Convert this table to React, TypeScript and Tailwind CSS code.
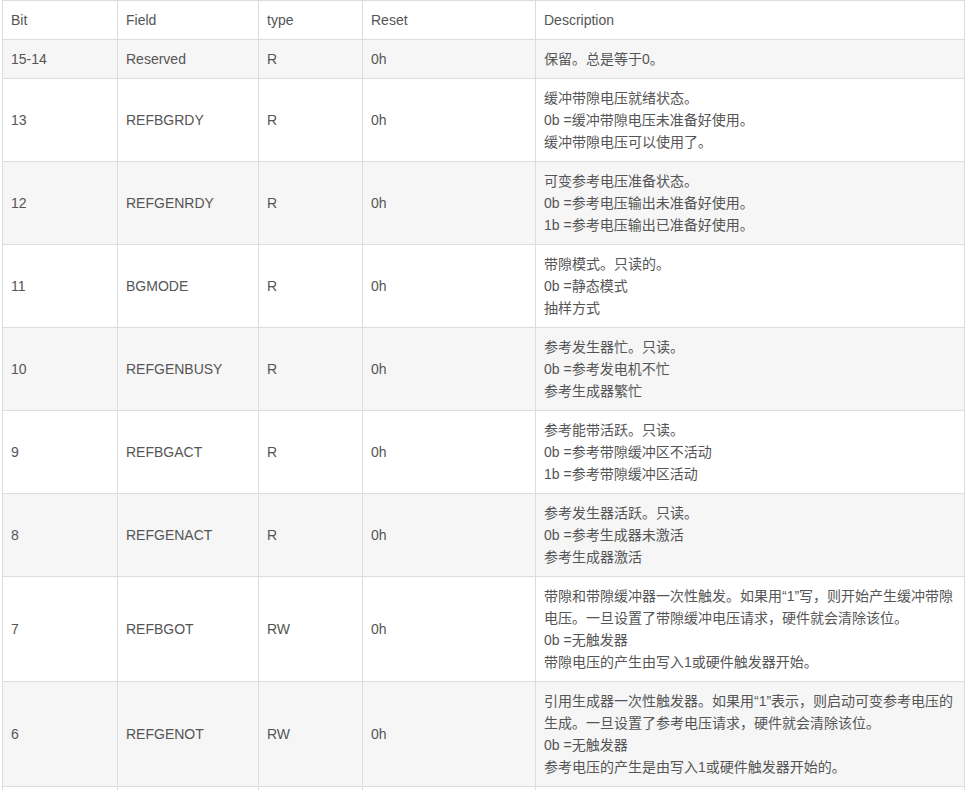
type Row = {
  bit: string;
  field: string;
  type: string;
  reset: string;
  desc: string[];
};

const rows: Row[] = [
  { bit: "15-14", field: "Reserved", type: "R", reset: "0h", desc: ["保留。总是等于0。"] },
  {
    bit: "13",
    field: "REFBGRDY",
    type: "R",
    reset: "0h",
    desc: ["缓冲带隙电压就绪状态。", "0b =缓冲带隙电压未准备好使用。", "缓冲带隙电压可以使用了。"],
  },
  {
    bit: "12",
    field: "REFGENRDY",
    type: "R",
    reset: "0h",
    desc: ["可变参考电压准备状态。", "0b =参考电压输出未准备好使用。", "1b =参考电压输出已准备好使用。"],
  },
  {
    bit: "11",
    field: "BGMODE",
    type: "R",
    reset: "0h",
    desc: ["带隙模式。只读的。", "0b =静态模式", "抽样方式"],
  },
  {
    bit: "10",
    field: "REFGENBUSY",
    type: "R",
    reset: "0h",
    desc: ["参考发生器忙。只读。", "0b =参考发电机不忙", "参考生成器繁忙"],
  },
  {
    bit: "9",
    field: "REFBGACT",
    type: "R",
    reset: "0h",
    desc: ["参考能带活跃。只读。", "0b =参考带隙缓冲区不活动", "1b =参考带隙缓冲区活动"],
  },
  {
    bit: "8",
    field: "REFGENACT",
    type: "R",
    reset: "0h",
    desc: ["参考发生器活跃。只读。", "0b =参考生成器未激活", "参考生成器激活"],
  },
  {
    bit: "7",
    field: "REFBGOT",
    type: "RW",
    reset: "0h",
    desc: [
      "带隙和带隙缓冲器一次性触发。如果用“1”写，则开始产生缓冲带隙",
      "电压。一旦设置了带隙缓冲电压请求，硬件就会清除该位。",
      "0b =无触发器",
      "带隙电压的产生由写入1或硬件触发器开始。",
    ],
  },
  {
    bit: "6",
    field: "REFGENOT",
    type: "RW",
    reset: "0h",
    desc: [
      "引用生成器一次性触发器。如果用“1”表示，则启动可变参考电压的",
      "生成。一旦设置了参考电压请求，硬件就会清除该位。",
      "0b =无触发器",
      "参考电压的产生是由写入1或硬件触发器开始的。",
    ],
  },
  { bit: "5", field: "REFBGEN", type: "RW", reset: "0h", desc: ["带隙和带隙缓冲器启用。"] },
];

const cell = "border border-[#dddddd] px-2 py-2 align-middle";

function Line({ children }: { children: React.ReactNode }) {
  return <div className="h-[22px] overflow-hidden leading-[22px]">{children}</div>;
}

export default function App() {
  return (
    <div
      className="bg-white pl-[2px] text-[14px] leading-[22px] text-[#555555]"
      style={{ fontFamily: '"Liberation Sans", Arial, "Noto Sans CJK SC", sans-serif' }}
    >
      <table className="w-[962px] table-fixed border-collapse">
        <colgroup>
          <col className="w-[115px]" />
          <col className="w-[141px]" />
          <col className="w-[104px]" />
          <col className="w-[173px]" />
          <col className="w-[429px]" />
        </colgroup>
        <thead>
          <tr className="bg-white">
            <th className={`${cell} text-left font-normal`}>
              <Line>Bit</Line>
            </th>
            <th className={`${cell} text-left font-normal`}>
              <Line>Field</Line>
            </th>
            <th className={`${cell} text-left font-normal`}>
              <Line>type</Line>
            </th>
            <th className={`${cell} text-left font-normal`}>
              <Line>Reset</Line>
            </th>
            <th className={`${cell} text-left font-normal`}>
              <Line>Description</Line>
            </th>
          </tr>
        </thead>
        <tbody>
          {rows.map((r, i) => (
            <tr key={r.bit} className={i % 2 === 0 ? "bg-[#f6f6f6]" : "bg-white"}>
              <td className={cell}>
                <Line>{r.bit}</Line>
              </td>
              <td className={cell}>
                <Line>{r.field}</Line>
              </td>
              <td className={cell}>
                <Line>{r.type}</Line>
              </td>
              <td className={cell}>
                <Line>{r.reset}</Line>
              </td>
              <td className={`${cell} whitespace-nowrap`}>
                {r.desc.map((line, j) => (
                  <Line key={j}>{line}</Line>
                ))}
              </td>
            </tr>
          ))}
        </tbody>
      </table>
    </div>
  );
}
